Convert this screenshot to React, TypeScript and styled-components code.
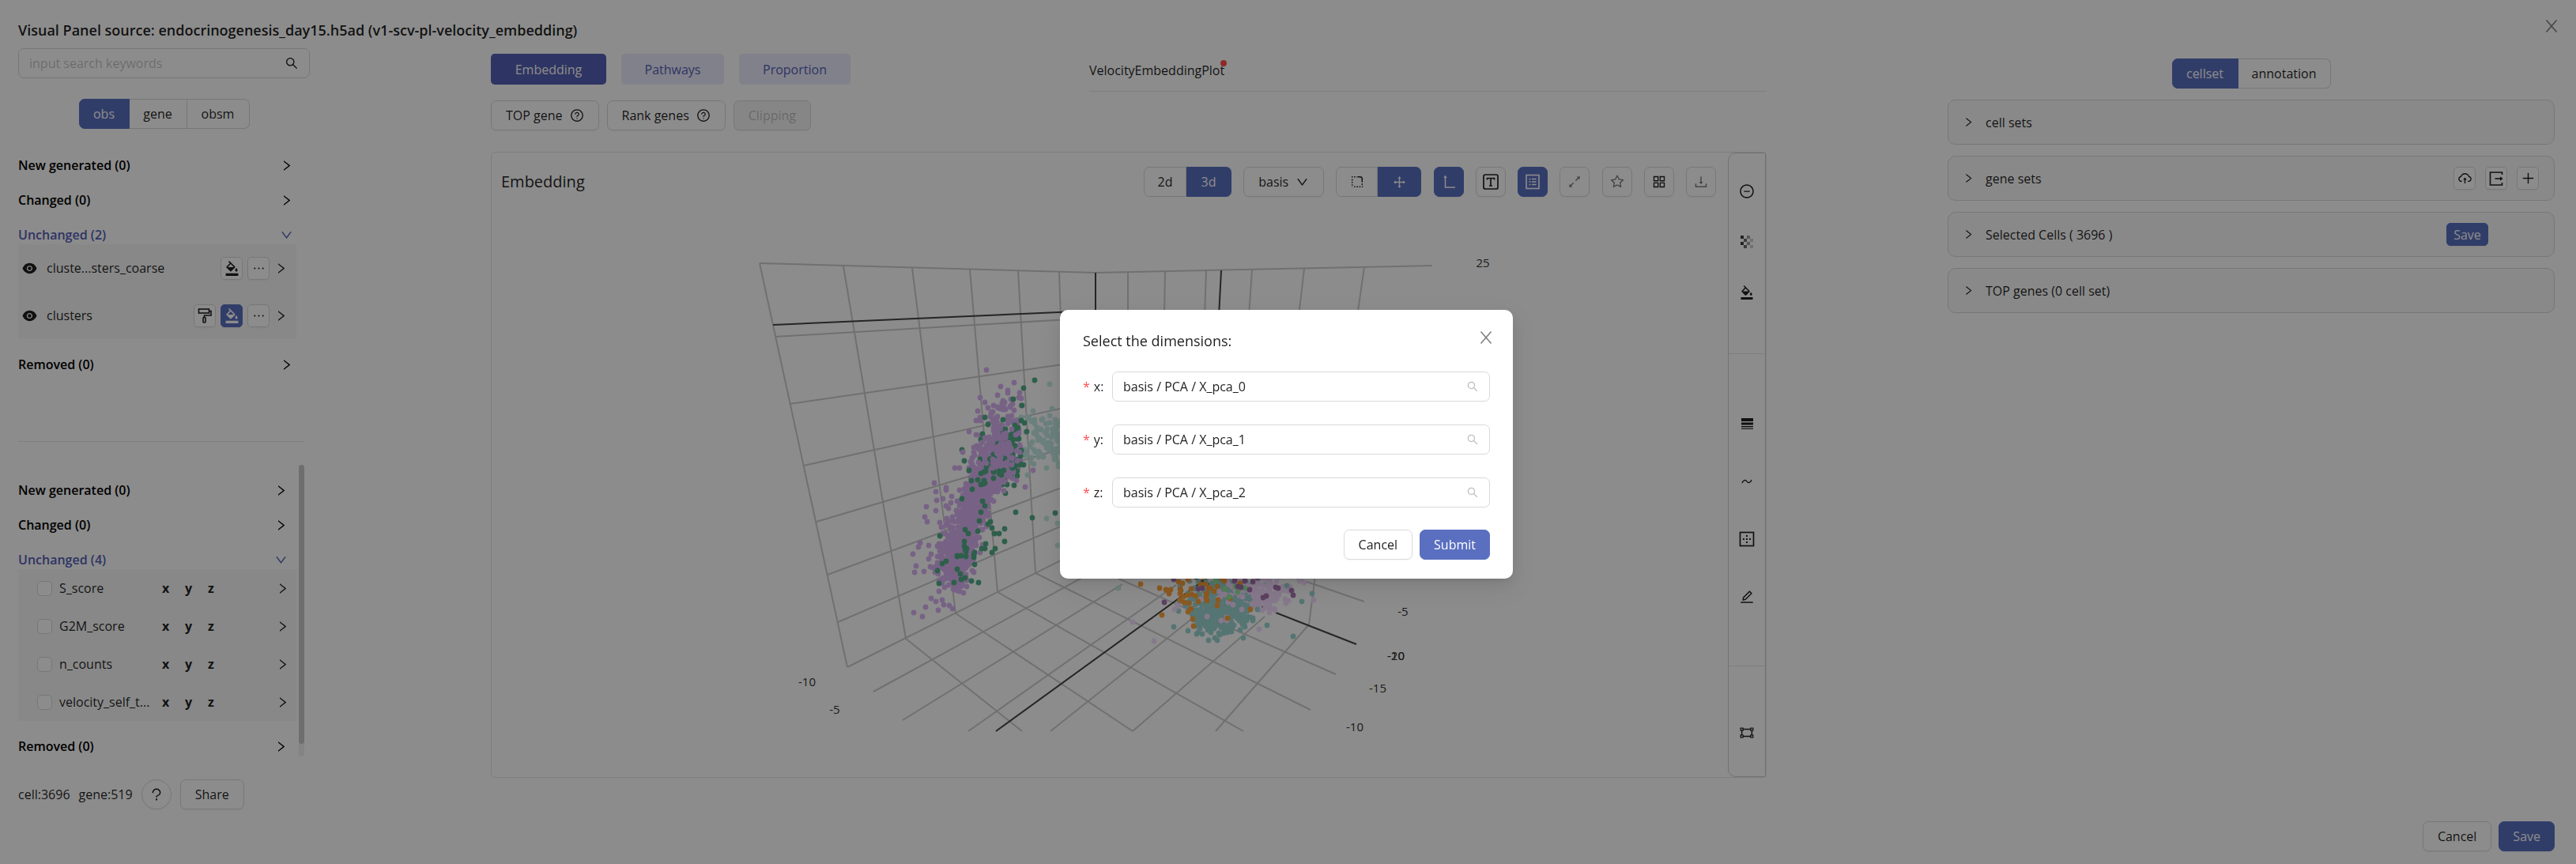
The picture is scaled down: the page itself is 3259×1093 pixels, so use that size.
import React from "react";
import styled, { createGlobalStyle, css } from "styled-components";
import {
  AiFillEye,
  AiOutlineAppstore,
  AiOutlineCloudUpload,
  AiOutlineDown,
  AiOutlineDownload,
  AiOutlineDrag,
  AiOutlineEdit,
  AiOutlineEllipsis,
  AiOutlineExpandAlt,
  AiOutlineGateway,
  AiOutlineMinusCircle,
  AiOutlinePlus,
  AiOutlineQuestion,
  AiOutlineQuestionCircle,
  AiOutlineRight,
  AiOutlineSearch,
  AiOutlineStar,
} from "react-icons/ai";
import { MdFormatColorFill } from "react-icons/md";

const color = {
  text: "rgba(0, 0, 0, 0.88)",
  strong: "#000",
  muted: "rgba(0, 0, 0, 0.5)",
  faint: "rgba(0, 0, 0, 0.25)",
  primary: "#5a6fc0",
  accent: "#5560b4",
  accentSoft: "#ececfd",
  border: "#d9d9d9",
  line: "#e6e6e6",
  fill: "#f8f8f8",
};

const GlobalStyle = createGlobalStyle`
  *, *::before, *::after { box-sizing: border-box; }
  body {
    margin: 0;
    background: #fff;
    color: ${color.text};
    font-family: "Segoe UI", "Open Sans", "Noto Sans", sans-serif;
    font-size: 16px;
    line-height: 24px;
  }
  button, input { font: inherit; color: inherit; }
  h1, h2, h3 { margin: 0; font-weight: 400; }
  svg { display: block; flex: none; }
`;

/* ---------- page frame ---------- */

const Page = styled.div`
  display: flex;
  flex-direction: column;
  min-height: 100vh;
  padding-bottom: 16px;
`;

const Header = styled.header`
  display: flex;
  align-items: flex-start;
  justify-content: space-between;
  height: 61px;
  padding: 21px 19px 0 23px;
`;

const Title = styled.h1`
  padding-top: 5px;
  font-size: 18px;
  line-height: 24px;
  font-weight: 600;
`;

const CloseButton = styled.button`
  display: grid;
  place-items: center;
  width: 24px;
  height: 24px;
  padding: 0;
  border: 0;
  background: none;
  color: ${color.muted};
`;

const Main = styled.main`
  display: grid;
  grid-template-columns: minmax(0, 369fr) minmax(0, 1614fr) minmax(0, 768fr);
  column-gap: 229px;
  padding: 0 27px 0 23px;
`;

const PageFooter = styled.footer`
  display: flex;
  justify-content: flex-end;
  gap: 9px;
  margin-top: auto;
  padding-right: 27px;
`;

/* ---------- shared controls ---------- */

const Button = styled.button<{ $primary?: boolean }>`
  display: inline-flex;
  align-items: center;
  justify-content: center;
  gap: 9px;
  height: 38px;
  padding: 0 ${(p) => (p.$primary ? 17 : 18)}px;
  border: 1px solid ${color.border};
  border-radius: 7px;
  background: #fff;
  white-space: nowrap;
  box-shadow: 0 2px 0 rgba(0, 0, 0, 0.02);
  ${(p) =>
    p.$primary &&
    css`
      border-color: ${color.primary};
      background: ${color.primary};
      color: #fff;
    `}
  &:disabled {
    background: #f5f5f5;
    color: ${color.faint};
  }
`;

const IconButton = styled(Button)<{ $muted?: boolean }>`
  width: 38px;
  padding: 0;
  font-size: 20px;
  ${(p) => p.$muted && `color: ${color.muted};`}
`;

const SmallButton = styled(Button)`
  min-width: 28px;
  height: 29px;
  padding: 0;
  border-radius: 5px;
  font-size: 19px;
`;

const SmallTextButton = styled(SmallButton)`
  min-width: 53px;
  margin-right: 64px;
  font-size: 16px;
`;

const RoundButton = styled(Button)`
  width: 38px;
  padding: 0;
  border-radius: 50%;
  font-size: 20px;
`;

const Segmented = styled.div`
  display: flex;
`;

const Segment = styled.button<{ $on?: boolean; $w: number }>`
  display: flex;
  align-items: center;
  justify-content: center;
  width: ${(p) => p.$w}px;
  height: 38px;
  padding: 0;
  border: 1px solid ${color.border};
  border-left-width: 0;
  background: #fff;
  &:first-child {
    border-left-width: 1px;
    border-radius: 7px 0 0 7px;
  }
  &:last-child {
    border-radius: 0 7px 7px 0;
  }
  ${(p) =>
    p.$on &&
    css`
      border-color: ${color.primary};
      background: ${color.primary};
      color: #fff;
    `}
`;

const Field = styled.div`
  display: flex;
  align-items: center;
  height: 38px;
  padding: 0 13px;
  border: 1px solid ${color.border};
  border-radius: 7px;
  background: #fff;
`;

const TextInput = styled.input`
  flex: 1;
  min-width: 0;
  padding: 0;
  border: 0;
  outline: 0;
  background: none;
  &::placeholder {
    color: ${color.faint};
    opacity: 1;
  }
`;

/* ---------- left column ---------- */

const Side = styled.aside`
  display: flex;
  flex-direction: column;
`;

const SegmentedRow = styled.div`
  display: flex;
  justify-content: center;
  padding: 26px 0 27px;
`;

const ScrollArea = styled.div<{ $divided?: boolean }>`
  display: flex;
  gap: 3px;
  width: 362px;
  height: 369px;
  ${(p) =>
    p.$divided &&
    css`
      border-bottom: 1px solid ${color.line};
      margin-bottom: 29px;
    `}
`;

const SectionList = styled.div<{ $top: number }>`
  display: flex;
  flex-direction: column;
  gap: 20px;
  width: 352px;
  padding-top: ${(p) => p.$top}px;
`;

const ScrollTrack = styled.div`
  width: 7px;
  border-radius: 4px;
  background: #f0f0f0;
`;

const ScrollThumb = styled.div`
  height: 353px;
  border-radius: 4px;
  background: #c8c8c8;
`;

const SectionHead = styled.button<{ $open?: boolean; $inset: number }>`
  display: flex;
  align-items: center;
  justify-content: space-between;
  width: 100%;
  height: 24px;
  padding: 0 ${(p) => p.$inset}px 0 0;
  border: 0;
  background: none;
  font-weight: 600;
  color: ${(p) => (p.$open ? color.accent : color.strong)};
`;

const SectionBody = styled.div`
  background: ${color.fill};
`;

const ClusterRow = styled.div`
  display: flex;
  align-items: center;
  gap: 6px;
  height: 60px;
  padding: 0 11px 0 4px;
`;

const ClusterName = styled.span`
  flex: 1;
  padding-left: 5px;
`;

const ScoreRow = styled.div`
  display: flex;
  align-items: center;
  height: 48px;
  padding: 0 9px 0 24px;
`;

const Tick = styled.input`
  appearance: none;
  flex: none;
  width: 19px;
  height: 19px;
  margin: 0 9px 0 0;
  border: 1px solid ${color.border};
  border-radius: 5px;
  background: #fff;
`;

const ScoreName = styled.label`
  width: 130px;
  white-space: nowrap;
`;

const Axis = styled.b`
  width: 29px;
`;

const RowArrow = styled(AiOutlineRight)`
  margin-left: auto;
  font-size: 17px;
`;

const SideFooter = styled.div`
  display: flex;
  align-items: center;
  gap: 11px;
  padding-top: 29px;
`;

/* ---------- middle column ---------- */

const Center = styled.section`
  padding-top: 7px;
`;

const TabsRow = styled.div`
  display: grid;
  grid-template-columns: minmax(0, 757fr) minmax(0, 857fr);
`;

const Tabs = styled.div`
  display: flex;
  gap: 19px;
`;

const Tab = styled.button<{ $on?: boolean; $w: number }>`
  width: ${(p) => p.$w}px;
  height: 39px;
  padding: 0;
  border: 0;
  border-radius: 5px;
  background: ${(p) => (p.$on ? color.accent : color.accentSoft)};
  color: ${(p) => (p.$on ? "#fff" : color.accent)};
`;

const PlotTabs = styled.div`
  display: flex;
  height: 48px;
  padding-top: 9px;
  border-bottom: 1px solid ${color.line};
`;

const PlotTab = styled.a`
  position: relative;
  height: 24px;
  color: inherit;
  text-decoration: none;
`;

const Dot = styled.i`
  position: absolute;
  top: -1px;
  right: -3px;
  width: 8px;
  height: 8px;
  border-radius: 50%;
  background: #ff4d4f;
`;

const ActionRow = styled.div`
  display: flex;
  gap: 10px;
  padding: 11px 0 27px;
`;

const Panel = styled.div`
  display: flex;
  border: 1px solid ${color.line};
  border-radius: 5px;
`;

const PanelMain = styled.div`
  flex: 1;
  min-width: 0;
`;

const PanelHead = styled.div`
  display: flex;
  align-items: center;
  justify-content: space-between;
  padding: 18px 15px 0 12px;
`;

const PanelTitle = styled.h2`
  font-size: 20px;
  line-height: 24px;
`;

const Toolbar = styled.div`
  display: flex;
  justify-content: space-between;
  width: 724px;
`;

const Plot = styled.svg`
  width: 100%;
  height: 734px;
`;

const PlotLabel = styled.text`
  fill: #333;
  font-size: 15px;
  text-anchor: middle;
`;

const Tools = styled.div`
  width: 48px;
  border: 1px solid #cfcfcf;
  border-radius: 10px 0 0 10px;
`;

const ToolGroup = styled.div<{ $top: number; $bottom: number }>`
  display: flex;
  flex-direction: column;
  align-items: center;
  padding: ${(p) => p.$top}px 0 ${(p) => p.$bottom}px;
  & + & {
    border-top: 1px solid ${color.line};
  }
`;

const Tool = styled.button<{ $h: number }>`
  display: grid;
  place-items: center;
  width: 40px;
  height: ${(p) => p.$h}px;
  padding: 0;
  border: 0;
  background: none;
  font-size: 20px;
`;

/* ---------- right column ---------- */

const Sets = styled.section`
  display: flex;
  flex-direction: column;
  gap: 14px;
  padding-top: 13px;
`;

const Centered = styled.div`
  display: flex;
  justify-content: center;
`;

const Card = styled.div`
  display: flex;
  align-items: center;
  min-height: 57px;
  padding: 0 19px 0 18px;
  border: 1px solid ${color.border};
  border-radius: 10px;
  background: #fafafa;
`;

const CardName = styled.h3`
  flex: 1;
  padding-left: 14px;
  font-size: 16px;
  line-height: 24px;
`;

const CardActions = styled.div`
  display: flex;
  gap: 12px;
`;

/* ---------- dialog ---------- */

const Mask = styled.div`
  position: fixed;
  inset: 0;
  display: grid;
  place-items: center;
  padding: 30px 4px 0 0;
  background: rgba(0, 0, 0, 0.45);
`;

const Dialog = styled.form`
  display: flex;
  flex-direction: column;
  gap: 28px;
  width: 573px;
  padding: 23px 29px 24px;
  border-radius: 10px;
  background: #fff;
  box-shadow: 0 7px 19px rgba(0, 0, 0, 0.08), 0 4px 7px -4px rgba(0, 0, 0, 0.12),
    0 11px 34px 10px rgba(0, 0, 0, 0.05);
`;

const DialogHead = styled.div`
  display: flex;
  justify-content: space-between;
  height: 27px;
`;

const DialogTitle = styled.h2`
  padding-top: 4px;
  font-size: 18px;
  line-height: 24px;
`;

const DialogClose = styled(CloseButton)`
  margin-right: -7px;
`;

const FieldRows = styled.div`
  display: grid;
  gap: 29px;
`;

const FieldRow = styled.div`
  display: grid;
  grid-template-columns: 37px 1fr;
  align-items: center;
`;

const FieldLabel = styled.label`
  &::before {
    content: "*";
    margin-right: 5px;
    color: #ff4d4f;
  }
`;

const FieldIcon = styled(AiOutlineSearch)`
  color: ${color.faint};
  font-size: 16px;
`;

const DialogFooter = styled.div`
  display: flex;
  justify-content: flex-end;
  gap: 9px;
`;

/* ---------- icons ---------- */

const iconProps = { width: 20, height: 20, viewBox: "0 0 20 20", fill: "none", stroke: "currentColor" } as const;

const CloseIcon = () => (
  <svg {...iconProps} strokeWidth={1.6}>
    <path d="M3.500 2.500 16.500 17.500M16.500 2.500 3.500 17.500" />
  </svg>
);

const RollerIcon = () => (
  <svg {...iconProps} strokeWidth={1.6}>
    <rect x="2.5" y="2" width="13" height="5" />
    <path d="M15.5 4.5H18V10H9.5v2.5" />
    <rect x="8" y="12.5" width="3" height="6.5" rx="1" />
  </svg>
);

const DashedIcon = () => (
  <svg {...iconProps} width={18} height={18} strokeWidth={1.6}>
    <path d="M2.200 3H10" strokeDasharray="1.700 1.900" />
    <path d="M3 6.500V17.500" strokeDasharray="1.700 1.900" />
    <path d="M5.800 17H18" strokeDasharray="1.700 1.900" />
    <path d="M17 14.500V12.500" />
    <path d="M10.500 3H14a3 3 0 0 1 3 3v4.500" />
  </svg>
);

const AxesIcon = () => (
  <svg {...iconProps} strokeWidth={1.5}>
    <path d="M5.500 4v13H18" />
    <path d="M5.500 1.500 7.700 5H3.300z" fill="currentColor" stroke="none" />
  </svg>
);

const TextBoxIcon = () => (
  <svg {...iconProps} strokeWidth={1.7}>
    <rect x="1" y="1" width="18" height="18" rx="2" />
    <path d="M5.500 7.500V5.500h9v2M10 5.500v9.500M8 15h4" />
  </svg>
);

const ListIcon = () => (
  <svg {...iconProps} strokeWidth={1.6}>
    <rect x="2" y="1.500" width="16" height="17" />
    <path d="M5.500 6.500h2M5.500 10h2M5.500 13.500h2M9 6.500h5.500M9 10h5.500M9 13.500h5.500" />
  </svg>
);

const ExportIcon = () => (
  <svg {...iconProps} strokeWidth={1.6}>
    <path d="M17.500 5V2H2.500v16h15v-3" />
    <path d="M8.500 10H16" />
    <path d="M15 7.300 18.500 10 15 12.700z" fill="currentColor" stroke="none" />
  </svg>
);

const InnerBorderIcon = () => (
  <svg {...iconProps} strokeWidth={1.7}>
    <rect x="1.500" y="1.500" width="17" height="17" />
    <path d="M9 10h2M5 10h2M13 10h2M9 6h2M9 14h2" strokeWidth={2} />
  </svg>
);

const CheckerIcon = () => (
  <svg width="16" height="16" viewBox="0 0 16 16" fill="currentColor">
    <path d="M0 0h4v4H0zM0 8h4v4H0z" opacity="0.85" />
    <path d="M4 4h4v4H4zM4 12h4v4H4z" opacity="0.65" />
    <path d="M8 0h4v4H8zM8 8h4v4H8z" opacity="0.42" />
    <path d="M12 4h4v4h-4zM12 12h4v4h-4z" opacity="0.22" />
  </svg>
);

const WeightIcon = () => (
  <svg width="15" height="14" viewBox="0 0 15 14" fill="currentColor">
    <path d="M0 0h15v4H0zM0 5.500h15v3H0zM0 10h15v1.500H0zM0 13h15v1H0z" />
  </svg>
);

const WaveIcon = () => (
  <svg {...iconProps} strokeWidth={1.4}>
    <path d="M4 12C5.500 8 8.500 7.500 10 10s4.500 2 6-2" />
  </svg>
);

/* ---------- 3d scatter ---------- */

type Line = [number, number, number, number];

const gridLines: Line[] = [
  [961, 333, 1386, 345],
  [1386, 345, 1812, 336],
  [961, 333, 1072, 844],
  [1072, 844, 1386, 687],
  [1067, 337, 1146, 808],
  [1154, 339, 1209, 776],
  [1227, 341, 1262, 749],
  [1288, 343, 1310, 725],
  [1340, 344, 1352, 704],
  [981, 426, 1386, 402],
  [999, 511, 1386, 455],
  [1017, 589, 1386, 507],
  [1033, 660, 1386, 555],
  [1047, 727, 1386, 601],
  [1060, 787, 1386, 647],
  [1427, 345, 1427, 400],
  [1474, 344, 1473, 400],
  [1526, 343, 1524, 400],
  [1584, 341, 1580, 400],
  [1650, 340, 1643, 400],
  [1726, 338, 1717, 400],
  [1664, 728, 1656, 790],
  [1146, 808, 1293, 925],
  [1209, 776, 1433, 925],
  [1262, 749, 1573, 925],
  [1310, 725, 1658, 898],
  [1415, 732, 1690, 853],
  [1630, 728, 1726, 761],
  [1105, 875, 1420, 703],
  [1142, 911, 1420, 739],
  [1225, 925, 1488, 740],
  [1329, 925, 1530, 765],
  [1433, 925, 1600, 780],
  [1538, 925, 1656, 790],
];

const zeroLines: Line[] = [
  [978, 411, 1386, 393],
  [1386, 345, 1386, 500],
  [1545, 342, 1542, 400],
  [1260, 925, 1530, 729],
  [1505, 729, 1530, 739],
  [1593, 766, 1599, 769],
  [1614, 775, 1716, 815],
];

const labels: [number, number, string][] = [
  [1876, 338, "25"],
  [1021, 868, "-10"],
  [1056, 903, "-5"],
  [1775, 779, "-5"],
  [1766, 835, "-20"],
  [1766, 835, "-10"],
  [1743, 876, "-15"],
  [1714, 925, "-10"],
];

type Cloud = { x: number; y: number; sx: number; sy: number; n: number; fill: string; slant?: number; minX?: number; maxX?: number };

const violet = "#d9b3f2";
const green = "#52ad88";
const mist = "#c4eae3";
const teal = "#9cd5d2";
const lilac = "#f6dcff";
const plum = "#a776b2";
const orange = "#ffa43c";
const lime = "#98eda0";

const clouds: Cloud[] = [
  { x: 1333, y: 556, sx: 26, sy: 22, n: 150, fill: mist, minX: 1288 },
  { x: 1268, y: 540, sx: 13, sy: 24, n: 90, fill: violet, maxX: 1295 },
  { x: 1262, y: 582, sx: 14, sy: 16, n: 170, fill: violet, maxX: 1292 },
  { x: 1277, y: 575, sx: 9, sy: 24, n: 110, fill: green, maxX: 1302 },
  { x: 1258, y: 588, sx: 14, sy: 15, n: 230, fill: violet, maxX: 1290 },
  { x: 1246, y: 610, sx: 12, sy: 14, n: 170, fill: violet },
  { x: 1230, y: 645, sx: 10, sy: 17, n: 210, fill: violet },
  { x: 1216, y: 680, sx: 12, sy: 14, n: 170, fill: violet },
  { x: 1208, y: 712, sx: 11, sy: 13, n: 220, fill: violet },
  { x: 1213, y: 735, sx: 7, sy: 7, n: 50, fill: violet },
  { x: 1195, y: 685, sx: 19, sy: 42, n: 45, fill: violet, maxX: 1240 },
  { x: 1252, y: 592, sx: 17, sy: 22, n: 38, fill: green, maxX: 1290 },
  { x: 1228, y: 690, sx: 16, sy: 26, n: 34, fill: green, slant: -0.5 },
  { x: 1264, y: 560, sx: 13, sy: 24, n: 60, fill: violet, maxX: 1292 },
  { x: 1548, y: 752, sx: 28, sy: 14, n: 180, fill: teal },
  { x: 1588, y: 745, sx: 22, sy: 11, n: 70, fill: lilac },
  { x: 1600, y: 756, sx: 10, sy: 9, n: 50, fill: lilac },
  { x: 1547, y: 777, sx: 19, sy: 13, n: 250, fill: teal },
  { x: 1565, y: 752, sx: 34, sy: 18, n: 36, fill: lilac },
  { x: 1522, y: 745, sx: 22, sy: 12, n: 38, fill: orange },
  { x: 1545, y: 740, sx: 20, sy: 12, n: 8, fill: lime },
  { x: 1560, y: 740, sx: 36, sy: 8, n: 14, fill: plum },
];

/* Points that stand clear of the clouds. */
const strays: [number, number, string][] = [
  [1248, 468, violet], [1283, 484, violet], [1266, 489, violet], [1275, 494, violet], [1262, 500, violet],
  [1240, 503, violet], [1250, 516, violet], [1237, 520, violet], [1257, 513, violet], [1270, 515, violet],
  [1235, 532, violet], [1226, 546, violet], [1292, 504, violet], [1218, 572, violet], [1214, 592, violet],
  [1182, 611, violet], [1184, 622, violet], [1172, 641, violet], [1184, 646, violet], [1197, 620, violet],
  [1173, 660, violet], [1155, 701, violet], [1159, 716, violet], [1175, 690, violet], [1175, 707, violet],
  [1178, 757, violet], [1184, 761, violet], [1192, 759, violet], [1194, 765, violet], [1205, 770, violet],
  [1156, 775, violet], [1167, 780, violet], [1187, 772, violet], [1297, 616, violet], [1307, 595, violet],
  [1309, 481, green], [1295, 491, green], [1282, 505, green], [1293, 513, green], [1246, 528, green],
  [1250, 537, green], [1306, 655, green], [1335, 649, green], [1285, 648, green], [1271, 669, green],
  [1258, 675, green], [1264, 675, green], [1271, 685, green], [1255, 699, green], [1246, 694, green],
  [1189, 678, green], [1217, 631, green], [1207, 737, green], [1233, 714, green], [1222, 704, green],
  [1328, 486, mist], [1307, 520, mist], [1338, 690, mist], [1338, 662, mist], [1324, 656, mist], [1415, 744, mist],
  [1443, 739, orange], [1467, 744, orange], [1475, 746, orange], [1481, 746, orange], [1491, 736, orange],
  [1493, 759, orange], [1507, 770, orange], [1509, 783, orange], [1510, 792, orange], [1553, 782, orange],
  [1470, 778, orange], [1582, 771, orange], [1473, 762, plum], [1485, 733, plum], [1516, 745, plum],
  [1636, 753, plum], [1485, 793, teal], [1503, 798, teal], [1529, 810, teal], [1540, 810, teal],
  [1573, 807, teal], [1603, 791, teal], [1636, 805, teal], [1647, 761, teal], [1660, 751, teal],
  [1628, 741, teal], [1460, 811, lilac], [1433, 787, lilac], [1630, 760, lilac], [1662, 759, lilac],
  [1644, 735, lilac], [1650, 737, lilac], [1626, 758, lilac], [1593, 796, lilac], [1490, 766, lilac],
];

const scatter = (() => {
  let seed = 11;
  const rand = () => {
    seed = (seed + 0x6d2b79f5) | 0;
    let t = Math.imul(seed ^ (seed >>> 15), 1 | seed);
    t = (t + Math.imul(t ^ (t >>> 7), 61 | t)) ^ t;
    return ((t ^ (t >>> 14)) >>> 0) / 4294967296;
  };
  const normal = () => Math.sqrt(-2 * Math.log(1 - rand() * 0.95)) * Math.cos(2 * Math.PI * rand());
  const points: [number, number, string][] = [];
  clouds.forEach((c) => {
    for (let i = 0; i < c.n; i += 1) {
      const dy = normal() * c.sy;
      const x = c.x + normal() * c.sx + dy * (c.slant ?? -0.2);
      if (x >= (c.minX ?? 0) && x <= (c.maxX ?? 9999)) points.push([Math.round(x), Math.round(c.y + dy), c.fill]);
    }
  });
  return points.concat(strays);
})();

const drawLines = (lines: Line[], stroke: string, width: number) =>
  lines.map(([x1, y1, x2, y2], i) => (
    <line key={stroke + i} x1={x1} y1={y1} x2={x2} y2={y2} stroke={stroke} strokeWidth={width} />
  ));

const EmbeddingPlot = () => (
  <Plot viewBox="622 249 1564 734" role="img" aria-label="3d embedding">
    {drawLines(gridLines, "#cdcdcd", 2)}
    {drawLines(zeroLines, "#444", 2)}
    {scatter.map(([x, y, fill], i) => (
      <circle key={i} cx={x} cy={y} r={3.4} fill={fill} />
    ))}
    {labels.map(([x, y, label], i) => (
      <PlotLabel key={i} x={x} y={y}>
        {label}
      </PlotLabel>
    ))}
  </Plot>
);

/* ---------- parts ---------- */

type SectionsProps = { unchanged: number; inset: number; top: number; children: React.ReactNode };

const Sections = ({ unchanged, inset, top, children }: SectionsProps) => (
  <SectionList $top={top}>
    <SectionHead $inset={inset}>
      New generated (0)
      <AiOutlineRight size={17} />
    </SectionHead>
    <SectionHead $inset={inset}>
      Changed (0)
      <AiOutlineRight size={17} />
    </SectionHead>
    <div>
      <SectionHead $inset={inset} $open>
        Unchanged ({unchanged})
        <AiOutlineDown size={17} />
      </SectionHead>
      <SectionBody>{children}</SectionBody>
    </div>
    <SectionHead $inset={inset}>
      Removed (0)
      <AiOutlineRight size={17} />
    </SectionHead>
  </SectionList>
);

const scores = ["S_score", "G2M_score", "n_counts", "velocity_self_t..."];

const LeftColumn = () => (
  <Side>
    <Field>
      <TextInput aria-label="Search" placeholder="input search keywords" />
      <AiOutlineSearch size={18} />
    </Field>
    <SegmentedRow>
      <Segmented>
        <Segment $w={64} $on>obs</Segment>
        <Segment $w={73}>gene</Segment>
        <Segment $w={79}>obsm</Segment>
      </Segmented>
    </SegmentedRow>
    <ScrollArea $divided>
      <Sections unchanged={2} inset={4} top={7}>
        <ClusterRow>
          <AiFillEye size={21} />
          <ClusterName>cluste...sters_coarse</ClusterName>
          <SmallButton aria-label="Fill"><MdFormatColorFill /></SmallButton>
          <SmallButton aria-label="More"><AiOutlineEllipsis /></SmallButton>
          <RowArrow />
        </ClusterRow>
        <ClusterRow>
          <AiFillEye size={21} />
          <ClusterName>clusters</ClusterName>
          <SmallButton aria-label="Format"><RollerIcon /></SmallButton>
          <SmallButton aria-label="Fill" $primary><MdFormatColorFill /></SmallButton>
          <SmallButton aria-label="More"><AiOutlineEllipsis /></SmallButton>
          <RowArrow />
        </ClusterRow>
      </Sections>
    </ScrollArea>
    <ScrollArea>
      <Sections unchanged={4} inset={11} top={20}>
        {scores.map((name, i) => (
          <ScoreRow key={name}>
            <Tick type="checkbox" id={`score-${i}`} />
            <ScoreName htmlFor={`score-${i}`}>{name}</ScoreName>
            <Axis>x</Axis>
            <Axis>y</Axis>
            <Axis>z</Axis>
            <RowArrow />
          </ScoreRow>
        ))}
      </Sections>
      <ScrollTrack>
        <ScrollThumb />
      </ScrollTrack>
    </ScrollArea>
    <SideFooter>
      <span>cell:3696</span>
      <span>gene:519</span>
      <RoundButton aria-label="Help"><AiOutlineQuestion /></RoundButton>
      <Button>Share</Button>
    </SideFooter>
  </Side>
);

const MiddleColumn = () => (
  <Center>
    <TabsRow>
      <Tabs>
        <Tab $on $w={146}>Embedding</Tab>
        <Tab $w={130}>Pathways</Tab>
        <Tab $w={141}>Proportion</Tab>
      </Tabs>
      <PlotTabs>
        <PlotTab href="#plot">
          VelocityEmbeddingPlot
          <Dot />
        </PlotTab>
      </PlotTabs>
    </TabsRow>
    <ActionRow>
      <Button>TOP gene <AiOutlineQuestionCircle size={18} /></Button>
      <Button>Rank genes <AiOutlineQuestionCircle size={18} /></Button>
      <Button disabled>Clipping</Button>
    </ActionRow>
    <Panel id="plot">
      <PanelMain>
        <PanelHead>
          <PanelTitle>Embedding</PanelTitle>
          <Toolbar>
            <Segmented>
              <Segment $w={54}>2d</Segment>
              <Segment $w={57} $on>3d</Segment>
            </Segmented>
            <Button>basis <AiOutlineDown size={17} /></Button>
            <Segmented>
              <Segment $w={53} aria-label="Select"><DashedIcon /></Segment>
              <Segment $w={55} $on aria-label="Pan"><AiOutlineDrag size={19} /></Segment>
            </Segmented>
            <IconButton $primary aria-label="Axes"><AxesIcon /></IconButton>
            <IconButton aria-label="Text"><TextBoxIcon /></IconButton>
            <IconButton $primary aria-label="Legend"><ListIcon /></IconButton>
            <IconButton $muted aria-label="Expand"><AiOutlineExpandAlt /></IconButton>
            <IconButton $muted aria-label="Favourite"><AiOutlineStar /></IconButton>
            <IconButton aria-label="Grid"><AiOutlineAppstore /></IconButton>
            <IconButton $muted aria-label="Download"><AiOutlineDownload /></IconButton>
          </Toolbar>
        </PanelHead>
        <EmbeddingPlot />
      </PanelMain>
      <Tools>
        <ToolGroup $top={16} $bottom={45}>
          <Tool $h={64} aria-label="Remove"><AiOutlineMinusCircle /></Tool>
          <Tool $h={64} aria-label="Opacity"><CheckerIcon /></Tool>
          <Tool $h={64} aria-label="Fill"><MdFormatColorFill size={18} /></Tool>
        </ToolGroup>
        <ToolGroup $top={51} $bottom={51}>
          <Tool $h={73} aria-label="Line weight"><WeightIcon /></Tool>
          <Tool $h={73} aria-label="Curve"><WaveIcon /></Tool>
          <Tool $h={73} aria-label="Inner border"><InnerBorderIcon /></Tool>
          <Tool $h={73} aria-label="Edit"><AiOutlineEdit /></Tool>
        </ToolGroup>
        <ToolGroup $top={52} $bottom={23}>
          <Tool $h={64} aria-label="Bounds"><AiOutlineGateway /></Tool>
        </ToolGroup>
      </Tools>
    </Panel>
  </Center>
);

const RightColumn = () => (
  <Sets>
    <Centered>
      <Segmented>
        <Segment $w={84} $on>cellset</Segment>
        <Segment $w={117}>annotation</Segment>
      </Segmented>
    </Centered>
    <Card>
      <AiOutlineRight size={15} />
      <CardName>cell sets</CardName>
    </Card>
    <Card>
      <AiOutlineRight size={15} />
      <CardName>gene sets</CardName>
      <CardActions>
        <SmallButton aria-label="Upload"><AiOutlineCloudUpload /></SmallButton>
        <SmallButton aria-label="Export"><ExportIcon /></SmallButton>
        <SmallButton aria-label="Add"><AiOutlinePlus /></SmallButton>
      </CardActions>
    </Card>
    <Card>
      <AiOutlineRight size={15} />
      <CardName>Selected Cells ( 3696 )</CardName>
      <SmallTextButton $primary>Save</SmallTextButton>
    </Card>
    <Card>
      <AiOutlineRight size={15} />
      <CardName>TOP genes (0 cell set)</CardName>
    </Card>
  </Sets>
);

const DimensionsDialog = () => (
  <Mask>
    <Dialog role="dialog" aria-label="Select the dimensions" onSubmit={(e) => e.preventDefault()}>
      <DialogHead>
        <DialogTitle>Select the dimensions:</DialogTitle>
        <DialogClose type="button" aria-label="Close"><CloseIcon /></DialogClose>
      </DialogHead>
      <FieldRows>
        {["x", "y", "z"].map((axis, i) => (
          <FieldRow key={axis}>
            <FieldLabel htmlFor={`dim-${axis}`}>{axis}:</FieldLabel>
            <Field>
              <TextInput id={`dim-${axis}`} defaultValue={`basis / PCA / X_pca_${i}`} />
              <FieldIcon />
            </Field>
          </FieldRow>
        ))}
      </FieldRows>
      <DialogFooter>
        <Button type="button">Cancel</Button>
        <Button type="submit" $primary>Submit</Button>
      </DialogFooter>
    </Dialog>
  </Mask>
);

const App = () => (
  <>
    <GlobalStyle />
    <Page>
      <Header>
        <Title>Visual Panel source: endocrinogenesis_day15.h5ad (v1-scv-pl-velocity_embedding)</Title>
        <CloseButton aria-label="Close panel"><CloseIcon /></CloseButton>
      </Header>
      <Main>
        <LeftColumn />
        <MiddleColumn />
        <RightColumn />
      </Main>
      <PageFooter>
        <Button>Cancel</Button>
        <Button $primary>Save</Button>
      </PageFooter>
    </Page>
    <DimensionsDialog />
  </>
);

export default App;
